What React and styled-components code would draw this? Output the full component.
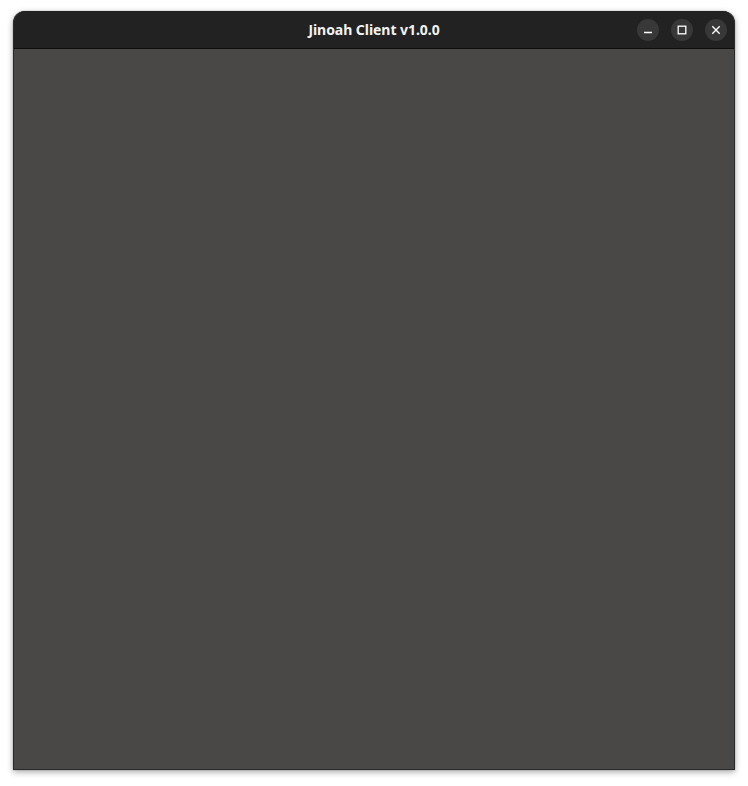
import React from "react";
import styled, { createGlobalStyle } from "styled-components";

const Global = createGlobalStyle`
  html, body { margin: 0; padding: 0; background: #ffffff; }
  #root { width: 748px; height: 786px; }
`;

const Page = styled.div`
  box-sizing: border-box;
  width: 748px;
  height: 786px;
  padding: 11px 13px 16px 13px;
  display: flex;
`;

const Window = styled.div`
  flex: 1;
  display: flex;
  flex-direction: column;
  border-radius: 12px 12px 0 0;
  overflow: hidden;
  background: #4a4846;
  box-shadow: 0 2px 6px rgba(0, 0, 0, 0.35), 0 0 1px rgba(0, 0, 0, 0.6);
  border-right: 1px solid #2a2a2a;
  border-left: 1px solid #2a2a2a;
  border-bottom: 1px solid #2a2a2a;
`;

const TitleBar = styled.div`
  height: 37px;
  flex: none;
  background: #222222;
  border-bottom: 1px solid #0f0f0f;
  display: flex;
  align-items: center;
  justify-content: flex-end;
  position: relative;
  padding-right: 7px;
`;

const Title = styled.div`
  position: absolute;
  left: 0;
  right: 0;
  top: 0;
  bottom: 0;
  display: flex;
  align-items: center;
  justify-content: center;
  color: #f2f2f2;
  font-family: "Noto Sans", "DejaVu Sans", sans-serif;
  font-weight: 700;
  font-size: 14px;
  letter-spacing: -0.05px;
  pointer-events: none;
`;

const Controls = styled.div`
  display: flex;
  gap: 12px;
  position: relative;
`;

const CtrlButton = styled.button`
  width: 22px;
  height: 22px;
  border-radius: 50%;
  border: none;
  padding: 0;
  background: #383838;
  display: flex;
  align-items: center;
  justify-content: center;
  cursor: pointer;
`;

const Content = styled.div`
  flex: 1;
  background: #4a4846;
`;

const Icon = ({ kind }) => (
  <svg width="10" height="10" viewBox="0 0 10 10" fill="none" stroke="#ffffff" strokeWidth="1.3">
    {kind === "min" && <line x1="1" y1="7.5" x2="9" y2="7.5" />}
    {kind === "max" && <rect x="1.2" y="1.2" width="7.6" height="7.6" />}
    {kind === "close" && (
      <>
        <line x1="1.3" y1="1.3" x2="8.7" y2="8.7" />
        <line x1="8.7" y1="1.3" x2="1.3" y2="8.7" />
      </>
    )}
  </svg>
);

export default function App() {
  return (
    <>
      <Global />
      <Page>
        <Window>
          <TitleBar>
            <Title>Jinoah Client v1.0.0</Title>
            <Controls>
              <CtrlButton aria-label="Minimize"><Icon kind="min" /></CtrlButton>
              <CtrlButton aria-label="Maximize"><Icon kind="max" /></CtrlButton>
              <CtrlButton aria-label="Close"><Icon kind="close" /></CtrlButton>
            </Controls>
          </TitleBar>
          <Content />
        </Window>
      </Page>
    </>
  );
}
